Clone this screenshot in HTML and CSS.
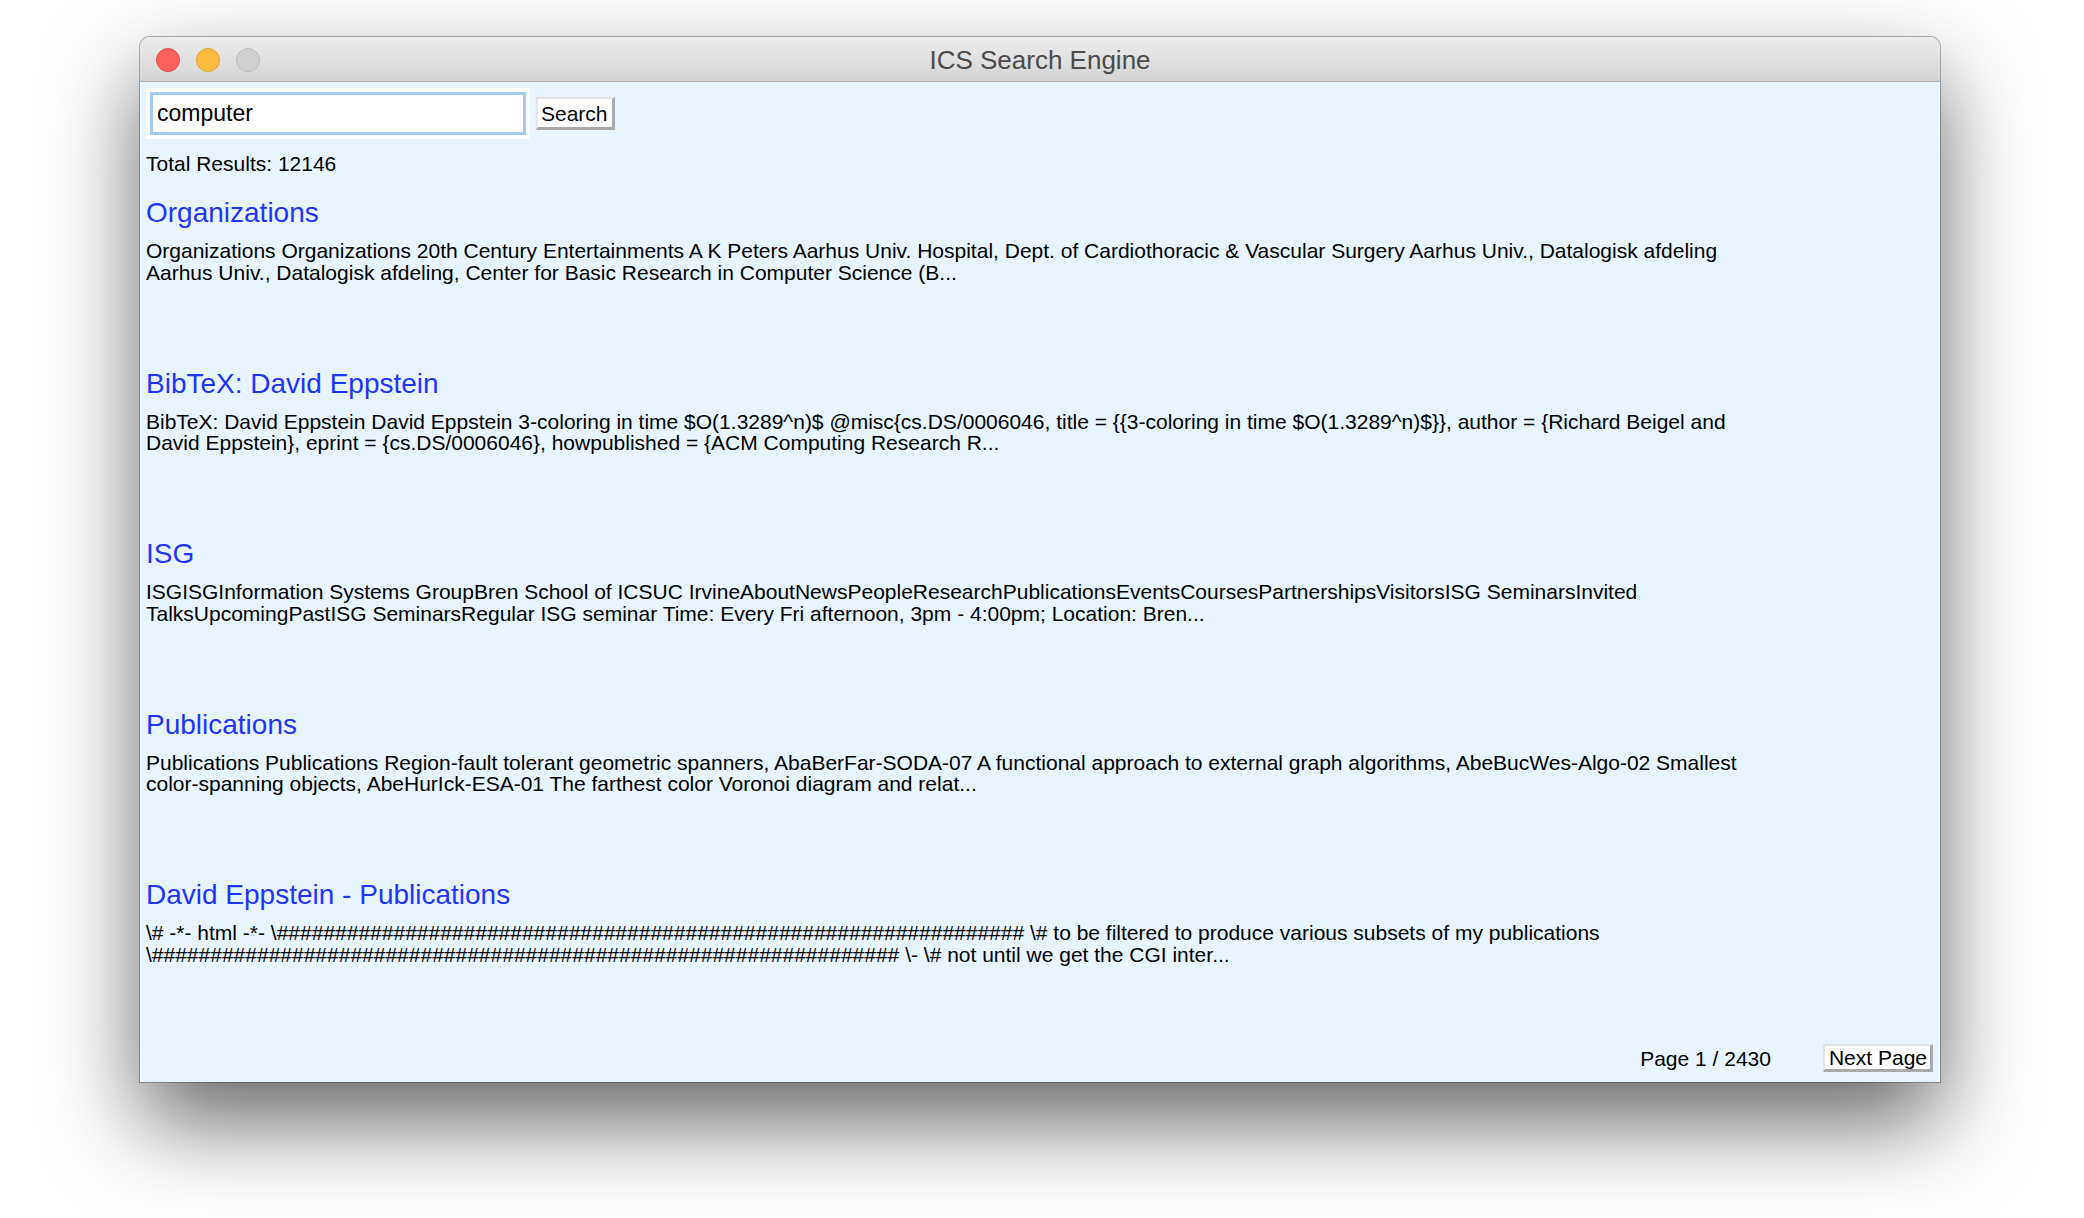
FILE: index.html
```html
<!DOCTYPE html>
<html lang="en">
<head>
<meta charset="utf-8">
<title>ICS Search Engine</title>
<link rel="stylesheet" href="styles.css">
</head>
<body>
<div class="window">
  <div class="titlebar">
    <div class="lights">
      <span class="light light-close"></span>
      <span class="light light-min"></span>
      <span class="light light-zoom"></span>
    </div>
    <div class="title">ICS Search Engine</div>
    <div class="titlebar-spacer"></div>
  </div>
  <div class="content">
    <div class="search-row">
      <div class="field"><input class="query" type="text" value="computer"></div>
      <button class="btn search-btn">Search</button>
    </div>
    <div class="total">Total Results: 12146</div>
    <div class="results">
      <div class="result">
        <a class="result-title" href="#">Organizations</a>
        <p class="snippet">Organizations Organizations 20th Century Entertainments A K Peters Aarhus Univ. Hospital, Dept. of Cardiothoracic &amp; Vascular Surgery Aarhus Univ., Datalogisk afdeling Aarhus Univ., Datalogisk afdeling, Center for Basic Research in Computer Science (B...</p>
      </div>
      <div class="result">
        <a class="result-title" href="#">BibTeX: David Eppstein</a>
        <p class="snippet">BibTeX: David Eppstein David Eppstein 3-coloring in time $O(1.3289^n)$ @misc{cs.DS/0006046, title = {{3-coloring in time $O(1.3289^n)$}}, author = {Richard Beigel and David Eppstein}, eprint = {cs.DS/0006046}, howpublished = {ACM Computing Research R...</p>
      </div>
      <div class="result">
        <a class="result-title" href="#">ISG</a>
        <p class="snippet">ISGISGInformation Systems GroupBren School of ICSUC IrvineAboutNewsPeopleResearchPublicationsEventsCoursesPartnershipsVisitorsISG SeminarsInvited TalksUpcomingPastISG SeminarsRegular ISG seminar Time: Every Fri afternoon, 3pm - 4:00pm; Location: Bren...</p>
      </div>
      <div class="result">
        <a class="result-title" href="#">Publications</a>
        <p class="snippet">Publications Publications Region-fault tolerant geometric spanners, AbaBerFar-SODA-07 A functional approach to external graph algorithms, AbeBucWes-Algo-02 Smallest color-spanning objects, AbeHurIck-ESA-01 The farthest color Voronoi diagram and relat...</p>
      </div>
      <div class="result">
        <a class="result-title" href="#">David Eppstein - Publications</a>
        <p class="snippet">\# -*- html -*- \################################################################ \# to be filtered to produce various subsets of my publications \################################################################ \- \# not until we get the CGI inter...</p>
      </div>
    </div>
    <div class="pager">
      <span class="page-info">Page 1 / 2430</span>
      <button class="btn next-btn">Next Page</button>
    </div>
  </div>
</div>
</body>
</html>
```

FILE: styles.css
```css
html, body {
  margin: 0;
  padding: 0;
}

body {
  min-height: 1218px;
  background: #ffffff;
  font-family: "Liberation Sans", Arial, Helvetica, sans-serif;
  color: #000;
}

.window {
  margin: 37px 0 0 140px;
  width: 1800px;
  height: 1045px;
  display: flex;
  flex-direction: column;
  background: #e8f4ff;
  border-radius: 10px 10px 0 0;
  box-shadow: 0 40px 90px rgba(0, 0, 0, 0.6), 0 0 0 1px rgba(0, 0, 0, 0.28);
}

.titlebar {
  height: 44px;
  flex: none;
  border-bottom: 1px solid #b2b2b2;
  border-radius: 10px 10px 0 0;
  background: linear-gradient(#ededed, #d4d4d4);
  display: grid;
  grid-template-columns: 1fr auto 1fr;
  align-items: center;
}

.lights {
  display: flex;
  gap: 16px;
  padding: 1px 0 0 16px;
}

.light {
  display: block;
  width: 24px;
  height: 24px;
  border-radius: 50%;
  box-sizing: border-box;
  border: 1px solid transparent;
}

.light-close {
  background: #fc605b;
  border-color: #de4b45;
}

.light-min {
  background: #fdbc40;
  border-color: #dea236;
}

.light-zoom {
  background: #d0d0d0;
  border-color: #bababa;
}

.title {
  font-size: 26px;
  color: #4b4b4b;
  padding-top: 3px;
}

.content {
  flex: 1;
  display: flex;
  flex-direction: column;
  padding: 6px 7px 10px 6px;
}

.search-row {
  display: flex;
  align-items: center;
  gap: 6px;
}

.field {
  background: #fff;
  padding: 4px;
}

.query {
  display: block;
  box-sizing: border-box;
  width: 376px;
  height: 43px;
  margin: 0;
  border: 3px solid #a3c8f3;
  padding: 0 4px;
  font-family: "Liberation Sans", Arial, sans-serif;
  font-size: 23px;
  color: #000;
  background: #fff;
  outline: none;
}

.btn {
  font-family: "Liberation Sans", Arial, sans-serif;
  font-size: 21px;
  line-height: 23px;
  color: #000;
  background: #fff;
  margin: 0;
  border-style: solid;
  border-width: 2px 3px 3px 2px;
  border-color: #e4e4e4 #a9a9a9 #a9a9a9 #e4e4e4;
}

.search-btn {
  padding: 3px 4px 2px 3px;
}

.next-btn {
  padding: 0 3px 0 4px;
}

.total {
  margin-top: 14px;
  font-size: 21px;
  line-height: 22px;
}

.results {
  margin-top: 22px;
}

.result {
  margin-bottom: 84.5px;
}

.result:last-child {
  margin-bottom: 0;
}

.result-title {
  display: block;
  font-size: 28px;
  line-height: 32px;
  color: #1e36fb;
  text-decoration: none;
}

.snippet {
  margin: 11px 0 0;
  font-size: 21px;
  line-height: 21.5px;
  max-width: 1610px;
}

.pager {
  margin-top: auto;
  display: flex;
  justify-content: flex-end;
  align-items: center;
  gap: 52px;
  font-size: 21px;
  line-height: 23px;
}
```
